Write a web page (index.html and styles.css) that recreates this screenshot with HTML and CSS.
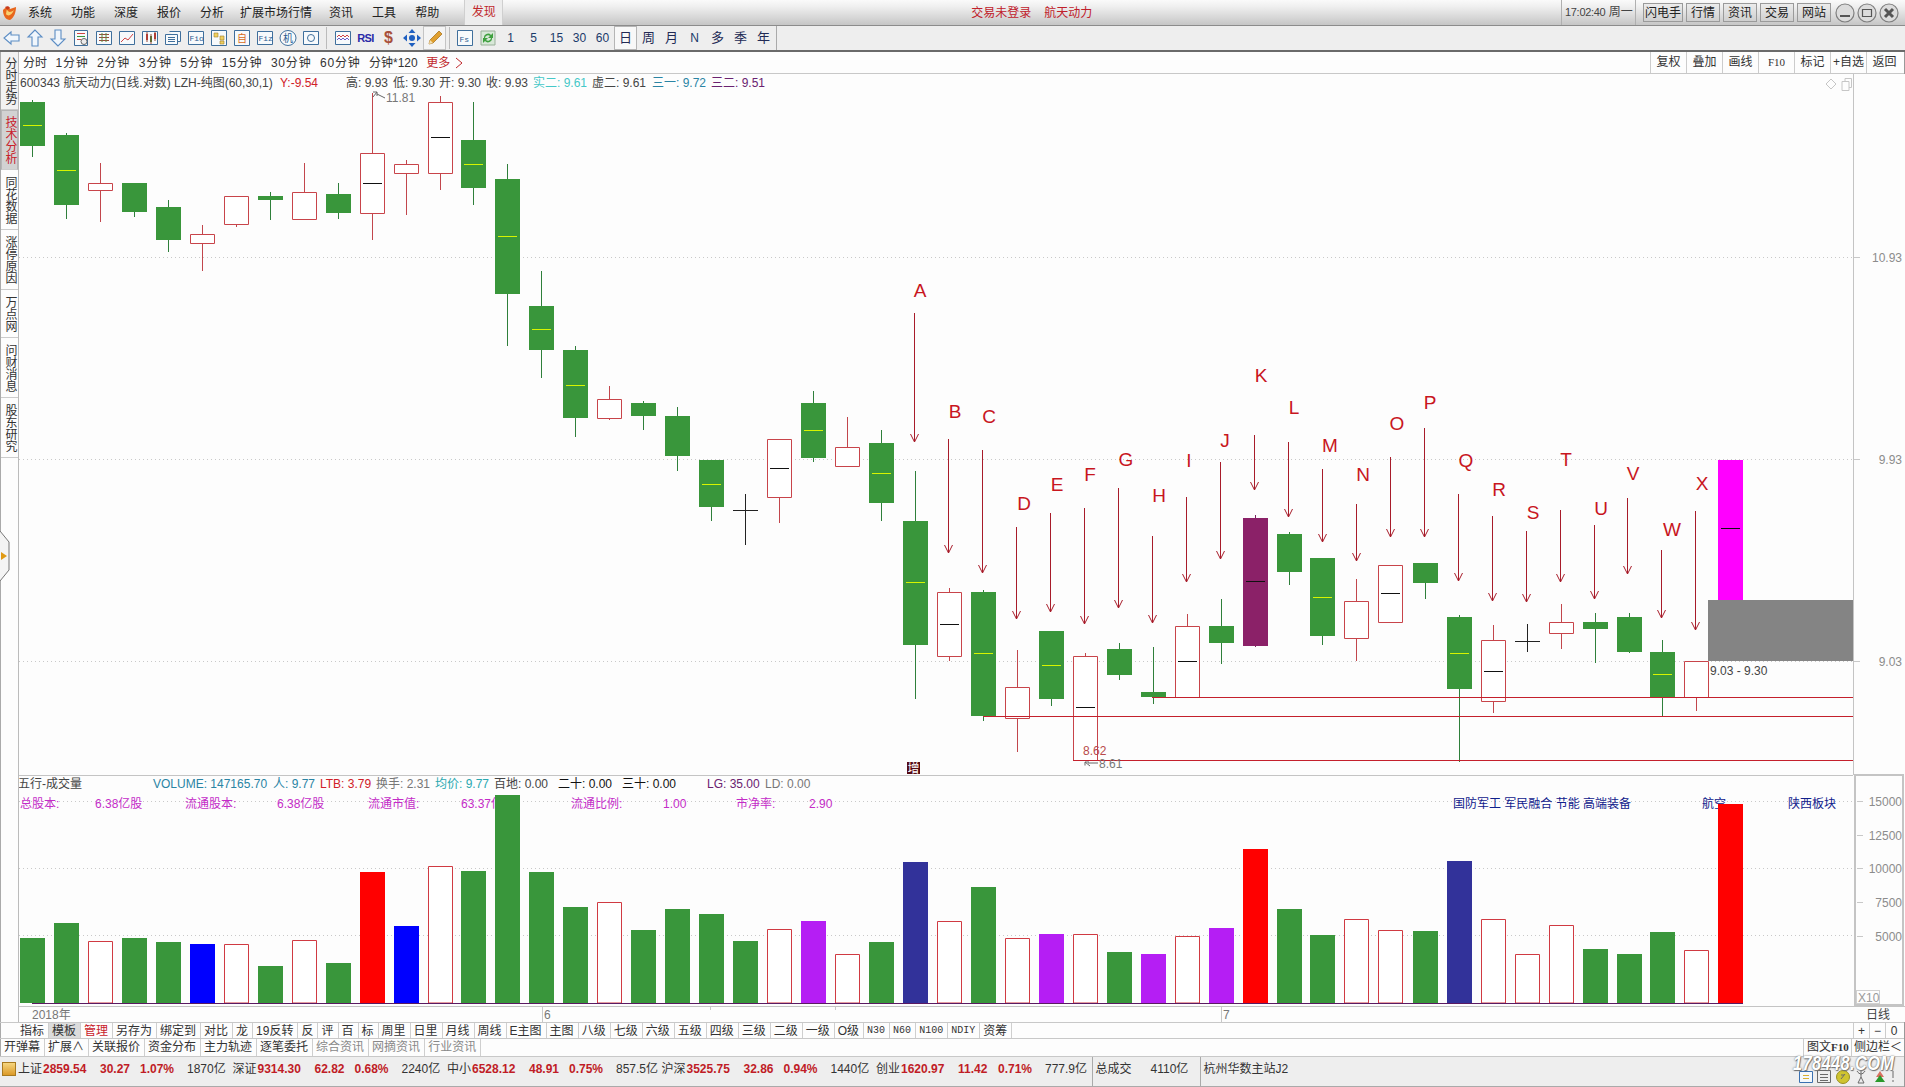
FILE: index.html
```html
<!DOCTYPE html>
<html lang="zh">
<head>
<meta charset="utf-8">
<title>航天动力</title>
<link rel="stylesheet" href="styles.css">
</head>
<body>
<div class="app">
  <header class="menubar">
    <svg class="logo" viewBox="0 0 16 16"><path d="M1 5C4 2 7 2 8 4L14 2C14 7 12 13 8 15C4 15 1 11 1 5Z" fill="#e8661c"/><path d="M5 3C5 6 7 9 12 5C10 10 6 12 4 9Z" fill="#f8d070"/><path d="M3 2C5 1 7 1 8 3L5 5Z" fill="#c83a1a"/></svg>
    <nav class="menu">
      <span>系统</span><span>功能</span><span>深度</span><span>报价</span><span>分析</span><span class="wide">扩展市场行情</span><span>资讯</span><span>工具</span><span>帮助</span>
    </nav>
    <span class="discover">发现</span>
    <span class="login">交易未登录</span><span class="stock-name">航天动力</span>
    <span class="spring"></span>
    <span class="clock"><span class="clock-num">17:02:40</span> 周一</span>
    <div class="quick">
      <span class="qbtn">闪电手</span><span class="qbtn">行情</span><span class="qbtn">资讯</span><span class="qbtn">交易</span><span class="qbtn">网站</span>
    </div>
    <div class="winbtns">
      <svg class="winbtn" viewBox="0 0 20 20"><circle cx="10" cy="10" r="9" class="ring"/><path d="M5 13H15" class="glyph"/></svg>
      <svg class="winbtn" viewBox="0 0 20 20"><circle cx="10" cy="10" r="9" class="ring"/><path d="M5.5 6.5H14.500V13.500H5.500Z" class="glyph thin"/></svg>
      <svg class="winbtn" viewBox="0 0 20 20"><circle cx="10" cy="10" r="9" class="ring"/><path d="M6 6L14 14M14 6L6 14" class="glyph bold"/></svg>
    </div>
  </header>

  <div class="toolbar">
    <span class="ti"><svg viewBox="0 0 18 18"><path d="M8 3L1 9L8 15V12H16V6H8Z" class="arw"/></svg></span>
    <span class="ti"><svg viewBox="0 0 18 18"><path d="M9 1L2 8H6V17H12V8H16Z" class="arw"/></svg></span>
    <span class="ti"><svg viewBox="0 0 18 18"><path d="M9 17L2 10H6V1H12V10H16Z" class="arw"/></svg></span>
    <span class="ti"><svg viewBox="0 0 18 18"><path d="M2.500 1.500H15.500V16.500H2.500Z" class="frm"/><path d="M5 4.500H13" class="rd"/><path d="M5 7.500H13" class="gr"/><path d="M5 10.500H9" class="rd"/><circle cx="12" cy="12.500" r="3" class="ci"/></svg></span>
    <span class="ti"><svg viewBox="0 0 18 18"><path d="M1.500 2.500H16.500V15.500H1.500Z" class="frm"/><path d="M4 5.500H14M4 8.500H14M4 11.500H14" class="rdk"/><path d="M7 4V13M11 4V13" class="gd"/></svg></span>
    <span class="ti"><svg viewBox="0 0 18 18"><path d="M1.500 2.500H16.500V15.500H1.500Z" class="frm"/><path d="M3 13L7 9L10 11L15 5" class="rd"/></svg></span>
    <span class="ti"><svg viewBox="0 0 18 18"><path d="M1.500 2.500H16.500V15.500H1.500Z" class="frm"/><path d="M5 5H7V11H5Z" class="fillr"/><path d="M9 7H11V13H9Z" class="fillg"/><path d="M13 4H15V10H13Z" class="fillr"/><path d="M6 3V13M10 5V15M14 3V12" class="rdk"/></svg></span>
    <span class="ti"><svg viewBox="0 0 18 18"><path d="M5.500 2.500H16.500V12.500H14" class="frm"/><path d="M1.500 5.500H13.500V15.500H1.500Z" class="frm"/><path d="M4 8.500H11M4 10.500H11M4 12.500H11" class="frm"/></svg></span>
    <span class="ti"><svg viewBox="0 0 18 18"><path d="M1.500 2.500H16.500V15.500H1.500Z" class="frm"/><text x="2.500" y="12" class="ic-t">Fio</text></svg></span>
    <span class="ti"><svg viewBox="0 0 18 18"><path d="M1.500 1.500H16.500V16.500H1.500Z" class="frm"/><path d="M4 4H8V8H4Z" class="filly"/><path d="M10 7H14V11H10Z" class="filly"/><path d="M10 12H14V15H10Z" class="filly"/></svg></span>
    <span class="ti"><svg viewBox="0 0 18 18"><path d="M1.500 1.500H16.500V16.500H1.500Z" class="frm"/><text x="4" y="13" class="ic-z">自</text></svg></span>
    <span class="ti"><svg viewBox="0 0 18 18"><path d="M1.500 2.500H16.500V15.500H1.500Z" class="frm"/><text x="2.500" y="12" class="ic-t">Fiz</text></svg></span>
    <span class="ti"><svg viewBox="0 0 18 18"><ellipse cx="9" cy="9" rx="8" ry="7.500" class="frm"/><text x="4" y="13" class="ic-h">机</text></svg></span>
    <span class="ti"><svg viewBox="0 0 18 18"><path d="M1.500 2.500H16.500V15.500H1.500Z" class="frm"/><circle cx="9" cy="9" r="3.500" class="frm"/></svg></span>
    <span class="tsep"></span>
    <span class="ti"><svg viewBox="0 0 18 18"><path d="M1.500 2.500H16.500V15.500H1.500Z" class="frm"/><path d="M3 8L5 6L7 8L9 6L11 8L13 6L15 8" class="rd"/><path d="M3 11L5 9L7 11L9 9L11 11L13 9L15 11" class="rdb"/></svg></span>
    <span class="ti rsi">RSI</span>
    <span class="ti dollar">$</span>
    <span class="ti"><svg viewBox="0 0 18 18"><path d="M9 0L12.500 4H5.500ZM9 18L5.500 14H12.500ZM0 9L4 5.500V12.500ZM18 9L14 12.500V5.500Z" class="fillb"/><circle cx="9" cy="9" r="3" class="fillb"/></svg></span>
    <span class="ti pencil"><svg viewBox="0 0 18 18"><path d="M3 15L4 11L13 2L16 5L7 14Z" class="pen"/><path d="M3 15L4 11L7 14Z" class="pen-tip"/></svg></span>
    <span class="tsep narrow"></span>
    <span class="ti"><svg viewBox="0 0 18 18"><path d="M1.500 1.500H16.500V16.500H1.500Z" class="frm"/><text x="3.500" y="12.500" class="ic-t">Fs</text></svg></span>
    <span class="ti"><svg viewBox="0 0 18 18"><path d="M2 2H16V16H2Z" class="refresh-bg"/><path d="M5 9A4 4 0 0 1 12 6L14 4V9H9L11 7A3 3 0 0 0 6 9ZM13 9A4 4 0 0 1 6 12L4 14V9H9L7 11A3 3 0 0 0 12 9Z" class="refresh"/></svg></span>
    <span class="ti per">1</span><span class="ti per">5</span><span class="ti per">15</span><span class="ti per">30</span><span class="ti per">60</span>
    <span class="ti per cjk active">日</span><span class="ti per cjk">周</span><span class="ti per cjk">月</span><span class="ti per">N</span><span class="ti per cjk">多</span><span class="ti per cjk">季</span><span class="ti per cjk">年</span>
    <span class="tend"></span>
  </div>

  <div class="main">
    <aside class="side">
      <span class="side-item short-first">分时走势</span>
      <span class="side-item active">技术分析</span>
      <span class="side-item">同花数据</span>
      <span class="side-item">涨停原因</span>
      <span class="side-item short">万点网</span>
      <span class="side-item">问财消息</span>
      <span class="side-item">股东研究</span>
      <svg class="handle" viewBox="0 0 10 54"><path d="M0 2L9 13V41L0 52" class="handle-box"/><path d="M1 23L7 27L1 31Z" class="handle-tri"/></svg>
    </aside>

    <div class="work">
      <div class="tabs">
        <span>分时</span><span class="mono">1分钟</span><span class="mono">2分钟</span><span class="mono">3分钟</span><span class="mono">5分钟</span><span class="mono">15分钟</span><span class="mono">30分钟</span><span class="mono">60分钟</span><span>分钟*120</span>
        <span class="more">更多<svg class="chev" viewBox="0 0 8 12"><path d="M1 1L7 6L1 11"/></svg></span>
        <div class="tabs-right">
          <span>复权</span><span>叠加</span><span>画线</span><span class="f10">F10</span><span>标记</span><span>+自选</span><span>返回</span>
        </div>
      </div>

      <svg class="chart" viewBox="19 74 1886 948" width="1886" height="948">
        <!-- grid -->
        <path class="grid" d="M19 257.500H1853M19 459.500H1853M19 661.500H1853M19 801.500H1853M19 868.500H1853M19 935.500H1853"/>
        <path class="tick" d="M1853 257.500H1860M1853 459.500H1860M1853 661.500H1860M1857 801.500H1863M1857 835.500H1863M1857 868.500H1863M1857 902.500H1863M1857 936.500H1863"/>

        <!-- header -->
        <text x="20" y="87">600343 航天动力(日线.对数) LZH-纯图(60,30,1)</text>
        <text x="280" y="87" class="t-red">Y:-9.54</text>
        <text x="346" y="87">高: 9.93</text><text x="393" y="87">低: 9.30</text><text x="439" y="87">开: 9.30</text><text x="486" y="87">收: 9.93</text>
        <text x="533" y="87" class="t-cyan">实二: 9.61</text><text x="592" y="87">虚二: 9.61</text>
        <text x="652" y="87" class="t-teal">三一: 9.72</text><text x="711" y="87" class="t-plum">三二: 9.51</text>
        <path class="mini" d="M1831 79L1836 84L1831 89L1826 84ZM1842 81.500H1849V90.500H1842ZM1845 81.500V78.500H1851.500V87.500H1849"/>

        <!-- candles -->
        <path class="w-g" d="M32.500 100V157M66.500 133V219M134.500 183V217M168.500 200V252M270.500 192V220M338.500 183V219M473.500 102V205M507.500 164V346M541.500 271V378M575.500 346V437M643.500 401V430M677.500 407V471M711.500 460V521M813.500 391V462M881.500 430V521M915.500 471V699M983.500 590V721M1051.500 631V706M1119.500 643V680M1153.500 647V704M1221.500 599V664M1289.500 532V585M1322.500 558V645M1425.500 563V599M1459.500 615V762M1595.500 613V663M1629.500 613V653M1662.500 640V716"/>
        <path class="w-h" d="M100.500 163V222M202.500 225V271M236.500 225V227M304.500 163V220M372.500 93V240M406.500 160V215M440.500 96V190M609.500 386V420M779.500 497V523M847.500 417V467M949.500 588V661M1017.500 650V752M1085.500 653V760M1187.500 614V660M1356.500 579V661M1493.500 625V713M1561.500 604V649M1696.500 697V711"/>
        <path class="b-g" d="M20 102h25v44h-25zM54 135h25v70h-25zM122 183h25v29h-25zM156 207h25v33h-25zM258 196h25v4h-25zM326 194h25v19h-25zM461 140h25v48h-25zM495 179h25v115h-25zM529 306h25v44h-25zM563 350h25v68h-25zM631 403h25v13h-25zM665 416h25v40h-25zM699 460h25v47h-25zM801 403h25v55h-25zM869 443h25v60h-25zM903 521h25v124h-25zM971 592h25v124h-25zM1039 631h25v68h-25zM1107 649h25v26h-25zM1141 692h25v5h-25zM1209 626h25v17h-25zM1277 534h25v38h-25zM1310 558h25v78h-25zM1413 563h25v20h-25zM1447 617h25v72h-25zM1583 622h25v7h-25zM1617 617h25v35h-25zM1650 652h25v45h-25z"/>
        <path class="b-h" d="M88.500 183.500h24v7h-24zM190.500 234.500h24v9h-24zM224.500 196.500h24v28h-24zM292.500 192.500h24v27h-24zM360.500 153.500h24v60h-24zM394.500 164.500h24v9h-24zM428.500 102.500h24v71h-24zM597.500 399.500h24v19h-24zM767.500 439.500h24v58h-24zM835.500 447.500h24v19h-24zM937.500 592.500h24v64h-24zM1005.500 687.500h24v31h-24zM1073.500 656.500h24v104h-24zM1175.500 626.500h24v71h-24zM1344.500 601.500h24v37h-24zM1378.500 565.500h24v57h-24zM1481.500 640.500h24v61h-24zM1549.500 622.500h24v11h-24zM1684.500 661.500h24v36h-24z"/>
        <path class="w-k" d="M745.500 494V545M733 510.500H758M1527.500 624V652M1515 641.500H1540"/>
        <path class="b-plum" d="M1255.500 515V647" />
        <path class="b-plumf" d="M1243 518h25v128h-25z"/>
        <path class="b-mag" d="M1718 460h25v140h-25z"/>
        <path class="m-y" d="M23 125.500h19M57 170.500h19M464 164.500h19M498 236.500h19M532 329.500h19M566 385.500h19M702 484.500h19M804 430.500h19M872 473.500h19M906 582.500h19M974 653.500h19M1042 665.500h19M1313 597.500h19M1450 653.500h19M1653 674.500h19"/>
        <path class="m-k" d="M363 183.500h19M431 137.500h19M770 468.500h19M940 624.500h19M1076 707.500h19M1178 661.500h19M1381 593.500h19M1484 671.500h19M1246 581.500h19M1721 528.500h19"/>

        <!-- support levels and box -->
        <path class="lvl" d="M1152 697.500H1853M983 716.500H1853M1073 760.500H1853"/>
        <rect class="gray-box" x="1708" y="600" width="145" height="61"/>
        <text x="1710" y="675">9.03 - 9.30</text>
        <text x="386" y="102" class="t-dim">11.81</text>
        <path class="pt" d="M373 97L377 92M373 92H377V96M377 94L385 98"/>
        <text x="1083" y="755" class="t-brick">8.62</text>
        <text x="1099" y="768" class="t-dim">8.61</text>
        <path class="pt" d="M1085 762L1090 766M1085 762V765.500M1085 762H1089M1088 763H1098"/>
        <rect class="zeng" x="907" y="762" width="13" height="12"/>
        <text x="907.500" y="772.500" class="t-zeng">增</text>

        <!-- annotation arrows -->
        <path class="arrow" d="M914.500 313V442M910.500 434L914.500 442L918.500 434M948.500 439V553M944.500 545L948.500 553L952.500 545M982.500 450V573M978.500 565L982.500 573L986.500 565M1016.500 527V619M1012.500 611L1016.500 619L1020.500 611M1050.500 513V612M1046.500 604L1050.500 612L1054.500 604M1084.500 508V624M1080.500 616L1084.500 624L1088.500 616M1118.500 488V608M1114.500 600L1118.500 608L1122.500 600M1152.500 536V623M1148.500 615L1152.500 623L1156.500 615M1186.500 497V582M1182.500 574L1186.500 582L1190.500 574M1220.500 462V559M1216.500 551L1220.500 559L1224.500 551M1254.500 435V490M1250.500 482L1254.500 490L1258.500 482M1288.500 442V517M1284.500 509L1288.500 517L1292.500 509M1322.500 469V542M1318.500 534L1322.500 542L1326.500 534M1356.500 504V561M1352.500 553L1356.500 561L1360.500 553M1390.500 457V537M1386.500 529L1390.500 537L1394.500 529M1424.500 428V537M1420.500 529L1424.500 537L1428.500 529M1458.500 494V581M1454.500 573L1458.500 581L1462.500 573M1492.500 516V601M1488.500 593L1492.500 601L1496.500 593M1526.500 531V602M1522.500 594L1526.500 602L1530.500 594M1560.500 510V582M1556.500 574L1560.500 582L1564.500 574M1594.500 525V599M1590.500 591L1594.500 599L1598.500 591M1627.500 498V574M1623.500 566L1627.500 574L1631.500 566M1661.500 550V618M1657.500 610L1661.500 618L1665.500 610M1695.500 511V630M1691.500 622L1695.500 630L1699.500 622"/>
        <g class="marks">
          <text x="920" y="297">A</text><text x="955" y="418">B</text><text x="989" y="423">C</text><text x="1024" y="510">D</text><text x="1057" y="491">E</text><text x="1090" y="481">F</text><text x="1126" y="466">G</text><text x="1159" y="502">H</text><text x="1189" y="467">I</text><text x="1225" y="447">J</text><text x="1261" y="382">K</text><text x="1294" y="414">L</text><text x="1330" y="452">M</text><text x="1363" y="481">N</text><text x="1397" y="430">O</text><text x="1430" y="409">P</text><text x="1466" y="467">Q</text><text x="1499" y="496">R</text><text x="1533" y="519">S</text><text x="1566" y="466">T</text><text x="1601" y="515">U</text><text x="1633" y="480">V</text><text x="1672" y="536">W</text><text x="1702" y="490">X</text>
        </g>

        <!-- axes -->
        <path class="frame" d="M18.500 74V1022M1853.500 74V775M19 775.500H1853M19 1006.500H1905"/>
        <rect class="vol-box" x="1855" y="775" width="48" height="230"/>
        <g class="axis">
          <text x="1902" y="262">10.93</text><text x="1902" y="464">9.93</text><text x="1902" y="666">9.03</text>
          <text x="1902" y="806">15000</text><text x="1902" y="840">12500</text><text x="1902" y="873">10000</text><text x="1902" y="907">7500</text><text x="1902" y="941">5000</text>
        </g>

        <!-- volume header -->
        <text x="18" y="788">五行-成交量</text>
        <text x="153" y="788" class="t-teal">VOLUME: 147165.70</text><text x="273" y="788" class="t-teal">人: 9.77</text><text x="320" y="788" class="t-red">LTB: 3.79</text><text x="376" y="788" class="t-dim">换手: 2.31</text><text x="435" y="788" class="t-cyan2">均价: 9.77</text><text x="494" y="788">百地: 0.00</text><text x="558" y="788" class="t-blk">二十: 0.00</text><text x="622" y="788" class="t-blk">三十: 0.00</text><text x="707" y="788" class="t-plum">LG: 35.00</text><text x="765" y="788" class="t-dim">LD: 0.00</text>
        <g class="fund">
          <text x="20" y="808">总股本:</text><text x="95" y="808">6.38亿股</text><text x="185" y="808">流通股本:</text><text x="277" y="808">6.38亿股</text><text x="368" y="808">流通市值:</text><text x="461" y="808">63.37亿</text><text x="571" y="808">流通比例:</text><text x="663" y="808">1.00</text><text x="736" y="808">市净率:</text><text x="809" y="808">2.90</text>
        </g>
        <g class="concept">
          <text x="1453" y="808">国防军工 军民融合 节能 高端装备</text><text x="1702" y="808">航空</text><text x="1788" y="808">陕西板块</text>
        </g>

        <!-- volume bars -->
        <path class="v-g" d="M20 938h25V1003h-25zM54 923h25V1003h-25zM122 938h25V1003h-25zM156 942h25V1003h-25zM258 966h25V1003h-25zM326 963h25V1003h-25zM461 871h25V1003h-25zM495 795h25V1003h-25zM529 872h25V1003h-25zM563 907h25V1003h-25zM631 930h25V1003h-25zM665 909h25V1003h-25zM699 914h25V1003h-25zM733 941h25V1003h-25zM869 942h25V1003h-25zM971 887h25V1003h-25zM1107 952h25V1003h-25zM1277 909h25V1003h-25zM1310 935h25V1003h-25zM1413 931h25V1003h-25zM1583 949h25V1003h-25zM1617 954h25V1003h-25zM1650 932h25V1003h-25z"/>
        <path class="v-h" d="M88.500 941.500h24V1003h-24zM224.500 944.500h24V1003h-24zM292.500 940.500h24V1003h-24zM428.500 866.500h24V1003h-24zM597.500 902.500h24V1003h-24zM767.500 929.500h24V1003h-24zM835.500 954.500h24V1003h-24zM937.500 921.500h24V1003h-24zM1005.500 938.500h24V1003h-24zM1073.500 934.500h24V1003h-24zM1175.500 936.500h24V1003h-24zM1344.500 919.500h24V1003h-24zM1378.500 930.500h24V1003h-24zM1481.500 919.500h24V1003h-24zM1515.500 954.500h24V1003h-24zM1549.500 925.500h24V1003h-24zM1684.500 950.500h24V1003h-24z"/>
        <path class="v-blue" d="M190 944h25V1003h-25zM394 926h25V1003h-25z"/>
        <path class="v-red" d="M360 872h25V1003h-25zM1243 849h25V1003h-25zM1718 804h25V1003h-25z"/>
        <path class="v-pur" d="M801 921h25V1003h-25zM1039 934h25V1003h-25zM1141 954h25V1003h-25zM1209 928h25V1003h-25z"/>
        <path class="v-navy" d="M903 862h25V1003h-25zM1447 861h25V1003h-25z"/>
        <path class="base" d="M32 1003.500H1743"/>

        <!-- date axis -->
        <path class="tick" d="M542.500 1007V1022M1221.500 1007V1022M710.500 1007V1010M835.500 1007V1010"/>
        <g class="date">
          <text x="32" y="1019">2018年</text><text x="544" y="1019">6</text><text x="1223" y="1019">7</text>
        </g>
        <rect class="x10" x="1856.500" y="990.500" width="23" height="13"/>
        <text x="1858" y="1002" class="t-x10">X10</text>
        <text x="1866" y="1019">日线</text>
      </svg>
    </div>
  </div>

  <div class="row r1">
    <span>指标</span><span class="sel">模板</span><span class="hot">管理</span><span>另存为</span><span>绑定到</span><span>对比</span><span>龙</span><span>19反转</span><span>反</span><span>评</span><span>百</span><span>标</span><span>周里</span><span>日里</span><span>月线</span><span>周线</span><span>E主图</span><span>主图</span><span>八级</span><span>七级</span><span>六级</span><span>五级</span><span>四级</span><span>三级</span><span>二级</span><span>一级</span><span>O级</span><span class="mono10">N30</span><span class="mono10">N60</span><span class="mono10">N100</span><span class="mono10">NDIY</span><span>资筹</span>
    <div class="r1-right"><span>+</span><span>−</span><span>0</span></div>
  </div>
  <div class="row r2">
    <span>开弹幕</span><span>扩展∧</span><span>关联报价</span><span>资金分布</span><span>主力轨迹</span><span>逐笔委托</span><span class="dim">综合资讯</span><span class="dim">网摘资讯</span><span class="dim">行业资讯</span>
    <div class="r2-right"><span class="g10">图文<b>F10</b></span><span class="side-bar">侧边栏＜</span></div>
  </div>

  <footer class="status">
    <span class="pin"></span>
    <span class="q"><span>上证</span><b>2859.54</b><b>30.27</b><b>1.07%</b><span>1870亿</span></span>
    <span class="q"><span>深证</span><b>9314.30</b><b>62.82</b><b>0.68%</b><span>2240亿</span></span>
    <span class="q"><span>中小</span><b>6528.12</b><b>48.91</b><b>0.75%</b><span>857.5亿</span></span>
    <span class="q"><span>沪深</span><b>3525.75</b><b>32.86</b><b>0.94%</b><span>1440亿</span></span>
    <span class="q"><span>创业</span><b>1620.97</b><b>11.42</b><b>0.71%</b><span>777.9亿</span></span>
    <span class="cell total"><span>总成交</span><span>4110亿</span></span>
    <span class="cell site">杭州华数主站J2</span>
    <div class="tray">
      <svg viewBox="0 0 16 16"><path d="M1.500 3.500H14.500V14.500H1.500Z" class="tr-b"/><path d="M5 7.500H11M5 10.500H11" class="tr-y"/></svg>
      <svg viewBox="0 0 16 16"><path d="M1.500 2.500H14.500V14.500H1.500Z" class="tr-g"/><path d="M4 6.500H12M4 9.500H12M4 12.500H12" class="tr-g"/></svg>
      <svg viewBox="0 0 16 16"><circle cx="8" cy="9" r="6.500" class="tr-c"/><path d="M6 11L10 6M6 7H9" class="tr-g"/></svg>
      <svg viewBox="0 0 16 16"><path d="M8 3V9M5 15L8 9L11 15ZM4 3C5 5 7 6 8 6C9 6 11 5 12 3" class="tr-g"/></svg>
      <svg viewBox="0 0 16 16"><path d="M8 3L12 9H4Z" class="tr-r"/><path d="M8 7L13 14H3Z" class="tr-gr"/></svg>
      <svg class="tr-small" viewBox="0 0 6 16"><path d="M3 3V10M3 12V14" class="tr-g"/></svg>
    </div>
    <span class="watermark">178448.COM</span>
  </footer>
</div>
</body>
</html>
```
FILE: styles.css
```css
* { box-sizing: border-box; }
html, body { margin: 0; padding: 0; }
body {
  width: 1905px; height: 1087px; overflow: hidden; background: #fdfdfd; color: #333;
  font: 12px/16px "Liberation Sans", "Noto Sans CJK SC", sans-serif;
}
.app { display: flex; flex-direction: column; height: 1087px; width: 1905px; border-left: 1px solid #aaa; border-right: 1px solid #999; }

/* top menu */
.menubar { height: 26px; flex: none; display: flex; align-items: center; background: linear-gradient(#fafafa, #f0f0f0 25%, #c6c6c6); border-bottom: 1px solid #8c8c8c; margin-left: -1px; margin-right: -1px; }
.logo { width: 16px; height: 16px; margin-left: 2px; flex: none; }
.menu { display: flex; gap: 19px; margin-left: 10px; color: #222; }
.menu .wide { margin: 0 -2px 0 -3px; }
.discover { color: #c0282c; margin-left: 25px; width: 39px; height: 25px; line-height: 25px; text-align: center; background: #ededed; border: 1px solid #cfcfcf; border-width: 0 1px; }
.login { color: #c0202a; margin-left: 468px; }
.stock-name { color: #c0202a; margin-left: 13px; }
.spring { flex: 1; }
.clock { width: 75px; height: 25px; line-height: 25px; border: 1px solid #b0b0b0; border-width: 0 1px; padding-left: 3px; color: #444; white-space: nowrap; }
.clock-num { font-size: 11px; letter-spacing: -.3px; }
.quick { display: flex; gap: 3px; margin-left: 7px; }
.qbtn { height: 19px; line-height: 18px; padding: 0 1px; background: linear-gradient(#ececec, #cfcfcf); border: 1px solid #9a9a9a; text-align: center; min-width: 34px; color: #222; }
.winbtns { display: flex; gap: 2px; margin: 0 6px 0 4px; }
.winbtn { width: 20px; height: 20px; }
.ring { fill: #dcdcdc; stroke: #7f7f7f; stroke-width: 1.2; }
.glyph { fill: none; stroke: #555; stroke-width: 2; }
.glyph.thin { stroke-width: 1.200; }
.glyph.bold { stroke-width: 3; }

/* tool icons */
.toolbar { height: 26px; flex: none; display: flex; align-items: center; background: #eeeeee; border-bottom: 2px solid #6a6a6a; margin-left: -1px; margin-right: -1px; }
.ti { width: 23px; height: 24px; flex: none; display: flex; align-items: center; justify-content: center; }
.ti svg { width: 18px; height: 18px; }
.tsep { width: 9px; height: 22px; flex: none; background: linear-gradient(#bbb, #bbb) center/1px 100% no-repeat; }
.tsep.narrow { width: 7px; }
.tend { width: 2px; height: 24px; border-left: 1px solid #aaa; margin-left: 1px; }
.per { color: #1a3a6a; font-size: 12px; }
.per.cjk { font-size: 13px; color: #222a55; }
.active { background: #f8f8f8; border: 1px solid #b5b5b5; }
.pencil { background: #f4f4f4; border: 1px solid #c4c4c4; }
.rsi { font-weight: bold; font-size: 11px; color: #2a2aa8; letter-spacing: -.6px; }
.dollar { font-weight: bold; font-size: 16px; color: #a8503a; }
.arw { fill: #f0f6fc; stroke: #5c8dc4; stroke-width: 1.100; }
.frm { fill: #f7fafc; stroke: #3f6f9c; stroke-width: 1; }
.rd { fill: none; stroke: #d04444; stroke-width: 1; }
.rdk { fill: none; stroke: #9a4a3a; stroke-width: 1; }
.rdb { fill: none; stroke: #6a5ac8; stroke-width: 1; }
.gr { fill: none; stroke: #3a963a; stroke-width: 1; }
.gd { fill: none; stroke: #5a8a3a; stroke-width: 1; }
.ci { fill: #ececec; stroke: #666; stroke-width: 1; }
.fillr { fill: #c83030; }
.fillg { fill: #2a8a2a; }
.filly { fill: #f0d060; stroke: #a08030; stroke-width: .6; }
.fillb { fill: #1f5fc0; }
.ic-t { font: 8px "Liberation Mono", monospace; fill: #2a5a90; }
.ic-z { font: 10px "Noto Sans CJK SC", sans-serif; fill: #d86a1a; }
.ic-h { font: 10px "Noto Sans CJK SC", sans-serif; fill: #2a5a90; }
.pen { fill: #e0a030; stroke: #a06a10; stroke-width: .7; }
.pen-tip { fill: #f4e0b0; }
.refresh-bg { fill: #d8e8d8; stroke: #9ab09a; }
.refresh { fill: #3fa03f; }

/* main area */
.main { flex: 1; display: flex; min-height: 0; margin-left: -1px; }
.side { width: 19px; flex: none; position: relative; display: flex; flex-direction: column; border-left: 1px solid #aaa; border-right: 1px solid #bbb; }
.side-item { height: 60px; flex: none; display: flex; align-items: center; justify-content: center; writing-mode: vertical-rl; text-orientation: upright; line-height: 17px; letter-spacing: 0; border-bottom: 1px solid #ccc; color: #333; }
.side-item.short-first { height: 58px; background: #f2f2f2; }
.side-item.short { height: 48px; }
.side-item.active { background: #d2d2d2; color: #c8202a; }
.handle { position: absolute; left: -1px; top: 477px; width: 10px; height: 54px; }
.handle-box { fill: #f4f4f4; stroke: #777; stroke-width: 1; }
.handle-tri { fill: #e09a14; }

.work { flex: 1; min-width: 0; display: flex; flex-direction: column; }
.tabs { height: 22px; flex: none; display: flex; align-items: center; gap: 8.500px; padding-left: 4px; background: #fdfdfd; border-bottom: 1px solid #c8c8c8; color: #333; }
.tabs .mono { letter-spacing: .8px; }
.more { color: #c0282c; display: flex; align-items: center; gap: 5px; }
.chev { width: 8px; height: 12px; fill: none; stroke: #c0282c; stroke-width: 1; }
.tabs-right { margin-left: auto; display: flex; height: 21px; margin-right: 2px; }
.tabs-right span { width: 36px; text-align: center; line-height: 21px; border-left: 1px solid #ccc; color: #333; }
.tabs-right .f10 { font: 11px/21px "Liberation Serif", serif; }

/* chart */
.chart { display: block; flex: none; background: #fdfdfd; font-size: 12px; }
.chart text { fill: #444; }
.chart .t-red { fill: #d02028; }
.chart .t-cyan { fill: #45c8c8; }
.chart .t-cyan2 { fill: #2aa8b0; }
.chart .t-teal { fill: #2a84a4; }
.chart .t-plum { fill: #6a2270; }
.chart .t-dim { fill: #777; }
.chart .t-blk { fill: #111; }
.chart .t-brick { fill: #b84a4a; }
.chart .t-zeng { fill: #fff; font-size: 12px; }
.chart .t-x10 { fill: #999; }
.zeng { fill: #560c14; }
.grid { fill: none; stroke: #c9c9c9; stroke-dasharray: 1 3; }
.tick { fill: none; stroke: #c8c8c8; }
.mini { fill: none; stroke: #c6c6c6; }
.frame { fill: none; stroke: #c4c4c4; }
.vol-box { fill: none; stroke: #c4c4c4; stroke-width: 2; }
.x10 { fill: #fdfdfd; stroke: #d0d0d0; }
.w-g { fill: none; stroke: #2f7f3b; }
.w-h { fill: none; stroke: #c2464c; }
.w-k { fill: none; stroke: #222; }
.b-g { fill: #39963b; }
.b-h { fill: #fff; stroke: #c8444a; }
.b-plum { fill: none; stroke: #7a2060; }
.b-plumf { fill: #8b2168; }
.b-mag { fill: #ff00ff; }
.m-y { fill: none; stroke: #d6f500; }
.m-k { fill: none; stroke: #111; }
.lvl { fill: none; stroke: #c4202c; }
.gray-box { fill: #848484; }
.pt { fill: none; stroke: #666; }
.arrow { fill: none; stroke: #a81c2a; stroke-width: 1; }
.marks text { fill: #c8161e; font-size: 19px; text-anchor: middle; }
.axis text { fill: #8c8c8c; text-anchor: end; }
.fund text { fill: #c42cc8; }
.concept text { fill: #10208c; }
.v-g { fill: #39963b; }
.v-h { fill: #fff; stroke: #d03a42; }
.v-blue { fill: #0000ff; }
.v-red { fill: #ff0000; }
.v-pur { fill: #b51ef4; }
.v-navy { fill: #32329a; }
.base { fill: none; stroke: #5a1a62; }
.date text { fill: #777; }

/* rows */
.row { flex: none; display: flex; position: relative; color: #333; margin-left: -1px; }
.row > span { padding: 0 4px 0 3px; border-right: 1px solid #cfcfcf; white-space: nowrap; }
.r1 { height: 17px; line-height: 16px; padding-left: 17px; border-top: 1px solid #c8c8c8; border-bottom: 1px solid #c8c8c8; }
.r1 .sel { background: #dcdcdc; }
.r1 .hot { color: #c8202a; }
.r1 .mono10 { font: 10px/15px "Liberation Mono", monospace; }
.r1-right { margin-left: auto; display: flex; margin-right: 2px; border-left: 1px solid #ccc; }
.r1-right span { width: 16px; text-align: center; border-right: 1px solid #ccc; }
.r1-right span:last-child { border-right: 0; }
.r2 { height: 18px; line-height: 17px; padding-left: 1px; border-bottom: 1px solid #c8c8c8; }
.r2 .dim { color: #888; }
.r2-right { margin-left: auto; display: flex; margin-right: 1px; }
.g10 { width: 49px; padding-left: 3px; border: 1px solid #ccc; border-width: 0 1px; white-space: nowrap; }
.g10 b { font: bold 11px "Liberation Serif", serif; }
.side-bar { width: 51px; padding-left: 2px; white-space: nowrap; }

/* status */
.status { flex: none; height: 30px; display: flex; background: #eeeeee; position: relative; margin-left: -1px; border-bottom: 1px solid #aaa; line-height: 14px; }
.pin { width: 14px; height: 14px; flex: none; margin: 5px 2px 0 2px; background: linear-gradient(#f6d680, #dc9a28); border: 1px solid #a87a20; }
.q { width: 214.500px; flex: none; display: grid; grid-template-columns: 25px 57px 40px 47px 1fr; padding-top: 5px; }
.q b { color: #c01c26; font-weight: bold; }
.cell { border-left: 1px solid #aaa; padding: 5px 0 0 3px; height: 29px; white-space: nowrap; }
.total { width: 108px; margin-left: 1px; display: flex; gap: 19px; }
.tray { margin-left: auto; display: flex; align-items: center; gap: 2.500px; margin-top: 8px; padding-right: 8px; }
.tray svg { width: 16px; height: 16px; }
.tray .tr-small { width: 6px; }
.tr-b { fill: #f4f8fc; stroke: #3a70b0; }
.tr-y { fill: none; stroke: #d8b030; }
.tr-g { fill: none; stroke: #6a6a6a; }
.tr-c { fill: #cfc430; stroke: #9a9020; }
.tr-r { fill: #d87060; }
.tr-gr { fill: #2a9a2a; }
.watermark { position: absolute; left: 1793px; top: -6px; font: bold italic 21px "Liberation Sans", sans-serif; color: #fff; text-shadow: 0 0 2px #555, 1px 1px 1px #777; transform: scaleX(.78); transform-origin: left center; letter-spacing: .5px; white-space: nowrap; }
```
